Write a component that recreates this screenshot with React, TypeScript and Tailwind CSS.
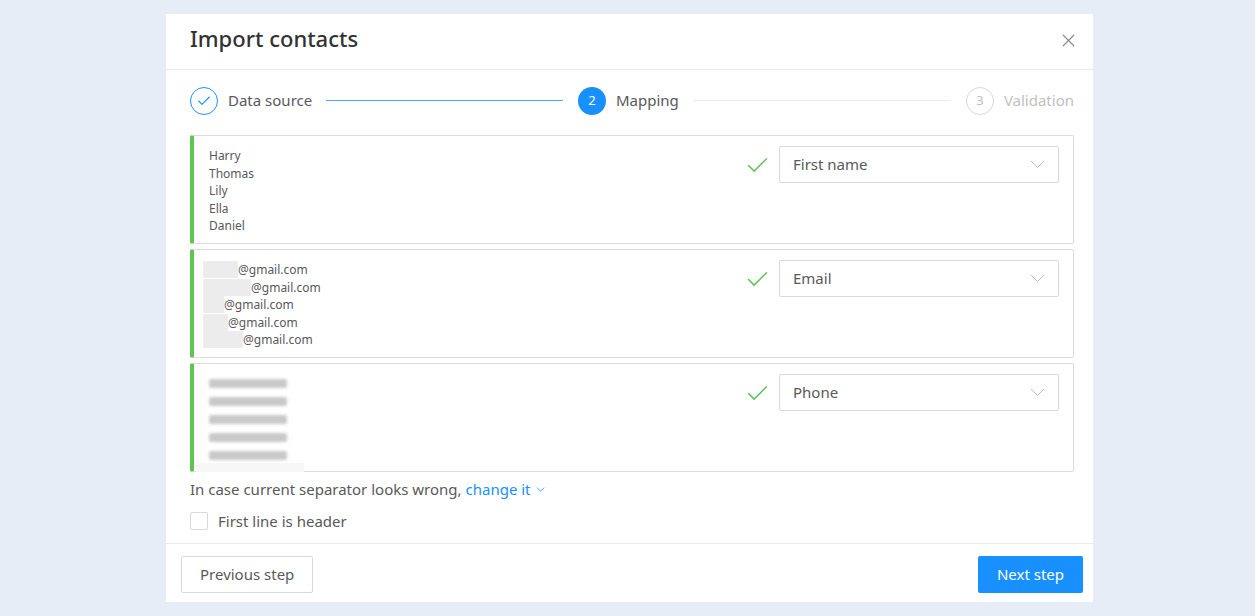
import { X, Check, ChevronDown } from "lucide-react";

const font = { fontFamily: '"Noto Sans", "Open Sans", sans-serif' };

const names = ["Harry", "Thomas", "Lily", "Ella", "Daniel"];
const emails = [35, 48, 21, 25, 40];
const phones = [78, 78, 78, 78, 78];

function Caret() {
  return (
    <svg width="15" height="9" viewBox="0 0 15 9" fill="none" className="text-[#bfbfbf]">
      <polyline points="1,1 7.5,7.5 14,1" stroke="currentColor" strokeWidth="1" />
    </svg>
  );
}

function FieldSelect({ label }: { label: string }) {
  return (
    <div className="flex items-start gap-[8px]">
      <Check className="mt-[6px] h-[27px] w-[27px] text-[#5ec552]" strokeWidth={1.3} />
      <div className="flex h-[37px] w-[280px] items-center justify-between rounded-[2px] border border-[#d9d9d9] bg-white pl-[13px] pr-[13px]">
        <span className="text-[15px] text-[#595959]">{label}</span>
        <Caret />
      </div>
    </div>
  );
}

function Row({ children, label, footer }: { children: React.ReactNode; label: string; footer?: boolean }) {
  return (
    <div className="relative flex h-[109px] justify-between rounded-[2px] border border-[#dcdcdc] border-l-4 border-l-[#5ec552] bg-white pr-[14px] pt-[10px]">
      <div className="pl-[15px] pt-[1px]">{children}</div>
      <FieldSelect label={label} />
      {footer && <div className="absolute bottom-[-1px] left-[2px] h-[9px] w-[108px] bg-[#f7f7f7]" />}
    </div>
  );
}

export default function App() {
  return (
    <div className="flex h-[616px] w-full justify-center bg-[#e6edf6] pt-[14px]" style={font}>
      <div className="ml-[4px] flex h-[588px] w-[927px] flex-col bg-white">
        <div className="flex h-[56px] items-center justify-between border-b border-[#ececec] pb-[6px] pl-[24px] pr-[14px]">
          <h1 className="text-[22px] font-medium text-[#333]">Import contacts</h1>
          <X className="mt-[4px] h-[21px] w-[21px] text-[#8c8c8c]" strokeWidth={1.4} />
        </div>

        <div className="flex flex-1 flex-col pl-[24px] pr-[19px]">
          <div className="flex h-[65px] items-center pb-[4px]">
            <div className="flex flex-1 items-center pr-[15px]">
              <div className="flex h-[28px] w-[28px] items-center justify-center rounded-full border border-[#1890ff]">
                <Check className="h-[16px] w-[16px] text-[#1890ff]" strokeWidth={1.6} />
              </div>
              <span className="ml-[10px] text-[15px] text-[#595959]">Data source</span>
              <div className="ml-[14px] h-px flex-1 bg-[#4aa6ff]" />
            </div>
            <div className="flex flex-1 items-center pr-[15px]">
              <div className="flex h-[28px] w-[28px] items-center justify-center rounded-full bg-[#1890ff] text-[13px] text-white">2</div>
              <span className="ml-[10px] text-[15px] text-[#595959]">Mapping</span>
              <div className="ml-[14px] h-px flex-1 bg-[#ebebeb]" />
            </div>
            <div className="flex items-center">
              <div className="flex h-[28px] w-[28px] items-center justify-center rounded-full border border-[#d9d9d9] text-[13px] text-[#bfbfbf]">3</div>
              <span className="ml-[10px] text-[15px] text-[#bfbfbf]">Validation</span>
            </div>
          </div>

          <div className="flex flex-col gap-[5px]">
            <Row label="First name">
              <div className="text-[12px] leading-[17.5px] text-[#595959]">
                {names.map((n) => (
                  <div key={n}>{n}</div>
                ))}
              </div>
            </Row>
            <Row label="Email">
              <div className="-ml-[6px] text-[12px] leading-[17.5px] text-[#595959]">
                {emails.map((w, i) => (
                  <div key={i} className="flex items-center">
                    <span className="h-[17px] bg-[#ececec]" style={{ width: w }} />
                    <span>@gmail.com</span>
                  </div>
                ))}
              </div>
            </Row>
            <Row label="Phone" footer>
              <div className="flex flex-col gap-[9px] pt-[4px]">
                {phones.map((w, i) => (
                  <div key={i} className="h-[9px] rounded-[2px] bg-[#c9c9c9] blur-[1.5px]" style={{ width: w }} />
                ))}
              </div>
            </Row>
          </div>

          <div className="mt-[6px] flex items-center text-[15px] text-[#595959]">
            In case current separator looks wrong,&nbsp;
            <span className="text-[#1890ff]">change it</span>
            <ChevronDown className="ml-[3px] h-[13px] w-[13px] text-[#1890ff]" strokeWidth={1.5} />
          </div>
          <label className="mt-[9px] flex items-center">
            <span className="h-[18px] w-[18px] rounded-[2px] border border-[#d9d9d9] bg-white" />
            <span className="ml-[10px] text-[15px] text-[#595959]">First line is header</span>
          </label>
        </div>

        <div className="flex h-[59px] items-center justify-between border-t border-[#ececec] pl-[15px] pr-[10px] pt-[2px]">
          <button className="h-[37px] rounded-[2px] border border-[#d9d9d9] bg-white px-[18px] text-[15px] text-[#595959]">
            Previous step
          </button>
          <button className="h-[37px] rounded-[2px] bg-[#1890ff] px-[19px] text-[15px] text-white">Next step</button>
        </div>
      </div>
    </div>
  );
}
